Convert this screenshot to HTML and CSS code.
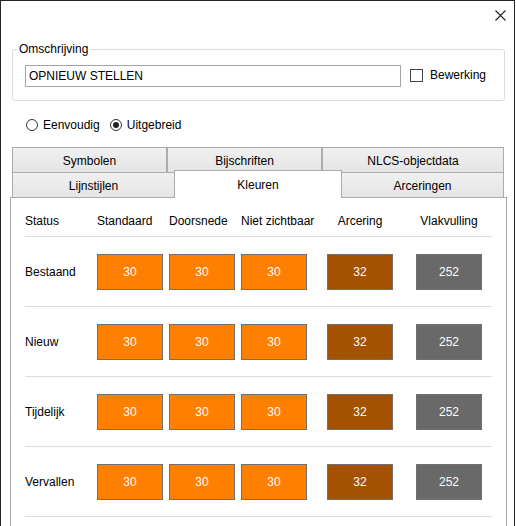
FILE: index.html
```html
<!DOCTYPE html>
<html lang="nl">
<head>
<meta charset="utf-8">
<title>Kleuren</title>
<link rel="stylesheet" href="styles.css">
</head>
<body>
<div class="window">
  <div class="titlebar">
    <svg class="close" width="11" height="11" viewBox="0 0 11 11"><path d="M0.5 0.5 L10.5 10.5 M10.5 0.5 L0.5 10.5" stroke="#222" stroke-width="1.1" fill="none"/></svg>
  </div>
  <fieldset class="group">
    <legend class="legend">Omschrijving</legend>
    <div class="group-body">
      <div class="input">OPNIEUW STELLEN</div>
      <span class="checkbox"></span>
      <span class="label">Bewerking</span>
    </div>
  </fieldset>
  <div class="radios">
    <span class="radio"></span><span class="label">Eenvoudig</span>
    <span class="radio on"></span><span class="label">Uitgebreid</span>
  </div>
  <div class="tabs">
    <div class="tabrow">
      <div class="tab t1">Symbolen</div>
      <div class="tab t1">Bijschriften</div>
      <div class="tab t1 wide">NLCS-objectdata</div>
    </div>
    <div class="tabrow row2">
      <div class="tab t2 a">Lijnstijlen</div>
      <div class="tab t2 sel">Kleuren</div>
      <div class="tab t2 b">Arceringen</div>
    </div>
  </div>
  <div class="panel">
    <div class="row head">
      <div>Status</div>
      <div>Standaard</div>
      <div>Doorsnede</div>
      <div>Niet zichtbaar</div>
      <div class="hc">Arcering</div>
      <div class="hc">Vlakvulling</div>
    </div>
    <div class="row">
      <div>Bestaand</div>
      <div class="sw o">30</div><div class="sw o">30</div><div class="sw o">30</div>
      <div class="sw br">32</div><div class="sw g">252</div>
    </div>
    <div class="row">
      <div>Nieuw</div>
      <div class="sw o">30</div><div class="sw o">30</div><div class="sw o">30</div>
      <div class="sw br">32</div><div class="sw g">252</div>
    </div>
    <div class="row">
      <div>Tijdelijk</div>
      <div class="sw o">30</div><div class="sw o">30</div><div class="sw o">30</div>
      <div class="sw br">32</div><div class="sw g">252</div>
    </div>
    <div class="row">
      <div>Vervallen</div>
      <div class="sw o">30</div><div class="sw o">30</div><div class="sw o">30</div>
      <div class="sw br">32</div><div class="sw g">252</div>
    </div>
  </div>
</div>
</body>
</html>
```

FILE: styles.css
```css
html, body {
  margin: 0;
  padding: 0;
  background: #fff;
  overflow: hidden;
  height: 526px;
}
body {
  font-family: "Liberation Sans", Arial, sans-serif;
  font-size: 12px;
  color: #000;
}
.window {
  width: 515px;
  height: 526px;
  overflow: hidden;
  box-sizing: border-box;
  border: 1px solid #262626;
  border-bottom: none;
  background: #fff;
}
.titlebar {
  height: 41px;
  box-sizing: border-box;
  display: flex;
  justify-content: flex-end;
  align-items: flex-start;
  padding-top: 9px;
  padding-right: 8px;
}
.close { display: block; }

.group {
  margin: 0 9px 0 11px;
  padding: 0;
  border: 1px solid #dcdcdc;
  border-radius: 3px;
}
.legend {
  margin-left: 4px;
  padding: 0 2px;
  line-height: 14px;
}
.group-body {
  display: flex;
  align-items: center;
  padding: 9px 12px 13px 12px;
}
.input {
  width: 376px;
  height: 22px;
  box-sizing: border-box;
  border: 1px solid #a5a5a5;
  padding-left: 3px;
  line-height: 20px;
}
.checkbox {
  width: 13px;
  height: 13px;
  box-sizing: border-box;
  border: 1px solid #444;
  margin-left: 9px;
  margin-right: 7px;
  margin-top: -1px;
}
.label { line-height: 14px; }
.group-body .label { margin-top: -3px; }

.radios {
  display: flex;
  align-items: center;
  margin-top: 17px;
  padding-left: 25px;
  height: 13px;
}
.radio {
  width: 12px;
  height: 12px;
  box-sizing: border-box;
  border: 1px solid #333;
  border-radius: 50%;
  margin-right: 5px;
  display: flex;
  align-items: center;
  justify-content: center;
}
.radio.on::after {
  content: "";
  width: 6px;
  height: 6px;
  border-radius: 50%;
  background: #222;
}
.radios .label { margin-right: 10px; }

.tabs {
  margin-top: 16px;
  margin-left: 11px;
}
.tabrow {
  display: flex;
  align-items: flex-end;
}
.tab {
  box-sizing: border-box;
  height: 25px;
  border: 1px solid #acacac;
  border-bottom: none;
  background: linear-gradient(#f0f0f0, #e5e5e5);
  display: flex;
  align-items: center;
  justify-content: center;
  padding-top: 1px;
}
.t1 { width: 155px; }
.t1.wide { width: 182px; }
.t2.a { width: 163px; }
.t2.sel {
  width: 168px;
  height: 28px;
  margin-left: -1px;
  margin-top: -2px;
  margin-bottom: -1px;
  background: #fff;
  position: relative;
  z-index: 1;
  padding-top: 0;
}
.t2.b { width: 163px; margin-left: -1px; }

.panel {
  margin-left: 9px;
  width: 497px;
  box-sizing: border-box;
  border: 1px solid #acacac;
  padding: 0 14px 40px 14px;
  background: #fff;
}
.row {
  display: grid;
  grid-template-columns: 72px 72px 72px 86px 89px 66px;
  align-items: center;
  border-bottom: 1px solid #dcdcdc;
  padding: 17px 0 16px 0;
}
.row.head {
  padding: 16px 0 8px 0;
  line-height: 14px;
  white-space: nowrap;
}
.hc {
  width: 66px;
  text-align: center;
}
.sw {
  width: 66px;
  height: 36px;
  box-sizing: border-box;
  border: 1px solid #707070;
  color: #fff;
  text-align: center;
  line-height: 34px;
}
.sw.o { background: #ff7f00; }
.sw.br { background: #a55200; }
.sw.g { background: #696969; }
```
